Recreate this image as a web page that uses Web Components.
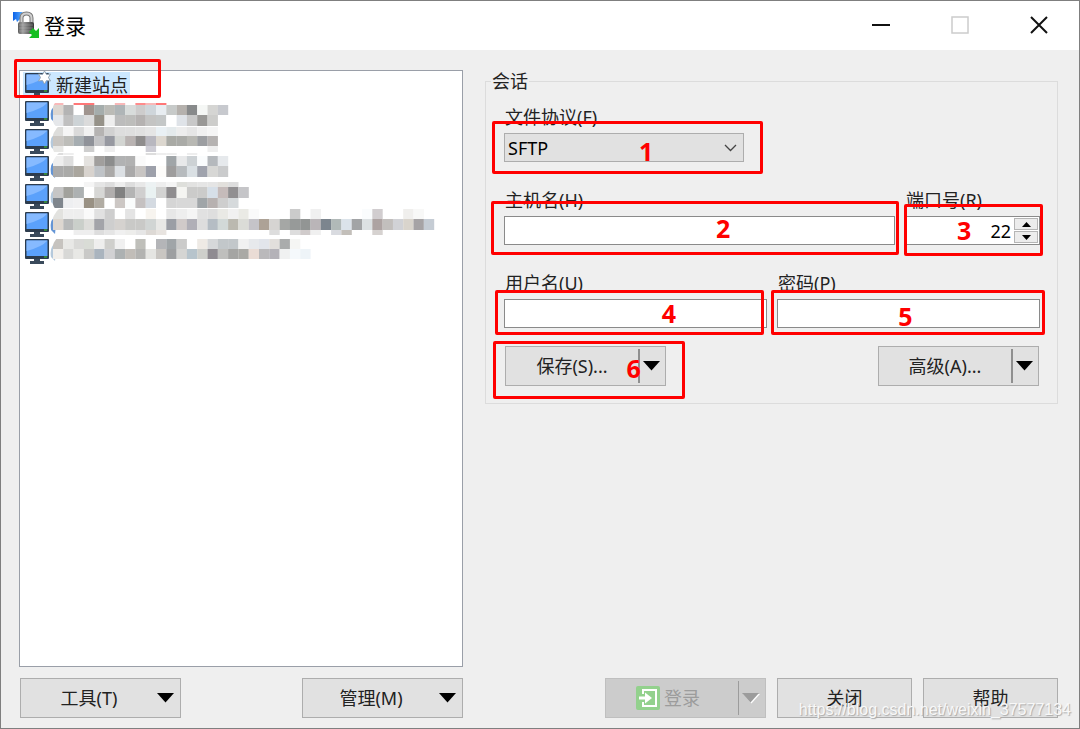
<!DOCTYPE html>
<html lang="zh-CN">
<head>
<meta charset="utf-8">
<meta name="viewport" content="width=device-width, initial-scale=1">
<title>登录</title>
<style>
  body {
    margin: 0;
    font: 18px/24px "Noto Sans", "Noto Sans CJK SC", sans-serif;
    color: #222;
    --face: #e1e1e1;
    --edge: #adadad;
    --mark: #ff0000;
  }
</style>
</head>
<body>
<login-dialog></login-dialog>

<script>
class BaseElement extends HTMLElement {
  constructor() {
    super();
    this.attachShadow({ mode: "open" });
  }
  connectedCallback() {
    const template = document.createElement("template");
    template.innerHTML = `<style>${this.getStyles()}</style>${this.getTemplate()}`;
    this.shadowRoot.replaceChildren(template.content.cloneNode(true));
  }
}

const downArrow = `<svg class="arrow" width="17" height="10" viewBox="0 0 17 10" aria-hidden="true"><path d="M0 0H17L8.5 9.5Z" fill="currentColor"/></svg>`;

// red frame with an optional step number, placed over its parent
customElements.define("step-mark", class extends BaseElement {
  getStyles() {
    return `
      :host {
        position: absolute;
        z-index: 2;
        border: 3px solid var(--mark);
        border-radius: 2px;
        pointer-events: none;
      }
      b {
        position: absolute;
        left: var(--x);
        top: var(--y);
        transform: translate(-50%, -50%);
        font-size: 25px;
        line-height: 28px;
        color: var(--mark);
      }
    `;
  }
  getTemplate() {
    return `<b><slot></slot></b>`;
  }
});

customElements.define("title-bar", class extends BaseElement {
  getStyles() {
    return `
      :host {
        display: flex;
        align-items: center;
        height: 49px;
        padding-left: 12px;
        background: #fff;
      }
      h1 {
        flex: 1;
        margin: 0 0 0 5px;
        font-size: 21px;
        line-height: 28px;
        font-weight: 400;
        color: #000;
      }
      button {
        display: grid;
        place-items: center;
        width: 79px;
        height: 48px;
        padding: 0;
        border: 0;
        background: none;
        color: #111;
      }
      button:last-child { margin-right: 1px; }
      svg { margin-bottom: 1px; }
      button:disabled { color: #ccc; }
    `;
  }
  getTemplate() {
    return `
      <svg width="26" height="28" viewBox="0 0 26 28" aria-hidden="true">
        <defs>
          <linearGradient id="body" x1="0" x2="1">
            <stop offset="0" stop-color="#5c5c5c"/><stop offset=".3" stop-color="#a0a0a0"/><stop offset="1" stop-color="#383838"/>
          </linearGradient>
          <linearGradient id="blue" x1="0" x2="1">
            <stop offset="0" stop-color="#0b62e8"/><stop offset="1" stop-color="#5fb0ff"/>
          </linearGradient>
        </defs>
        <path d="M0 1H10L7 4L9 6L4 11L3 8L0 10Z" fill="url(#blue)"/>
        <path d="M8.500 14V7Q8.500 2.500 13.500 2.500T18.500 7V14" fill="none" stroke="#777" stroke-width="4"/>
        <path d="M8.500 14V7Q8.500 2.500 13.500 2.500T18.500 7V14" fill="none" stroke="#d0d0d0" stroke-width="2"/>
        <rect x="5" y="11" width="16" height="12" rx="2" fill="url(#body)"/>
        <path d="M6 14H20M6 17H20M6 20H20" stroke="#ccc" stroke-width="1" opacity=".3"/>
        <path d="M26 17V27H16L19 24L16 21L20 17L23 20Z" fill="#16bf22"/>
      </svg>
      <h1><slot></slot></h1>
      <button type="button" aria-label="最小化"><svg width="18" height="18"><path d="M0 9H18" stroke="currentColor" stroke-width="2"/></svg></button>
      <button type="button" aria-label="最大化" disabled><svg width="18" height="18"><rect x="1" y="1" width="16" height="16" fill="none" stroke="currentColor" stroke-width="1.500"/></svg></button>
      <button type="button" aria-label="关闭窗口"><svg width="18" height="18"><path d="M1 1L17 17M17 1L1 17" stroke="currentColor" stroke-width="2"/></svg></button>
    `;
  }
});

// blurred site names: [top, height, first column, colours]; "-" leaves a cell empty
const names = {
  1: [
    [4, 2, 0, "f9b8b8 - ff7777 ff7777 - - f9b8b8 - ff8b8b f9b8b8 ff7777"],
    [6, 10, 0, "dcd6d0 b4b4b4 fff a0958f a5adac bbbbb6 afb5b7 d8dcdb cdcccc cfd6db e8edf1 c7cac9 b5b1ad 888a8b f5f7f5 d5d5d3 c7c9ce"],
    [16, 11, 0, "e5e7ea c0c0c0 cdd3d6 dbdbdb 969289 eeeeee bcbcbc bdbdbb b5b2b1 c4c4c3 c4c7c7 fff dfe3e8 c8c8c8 999896 cdcdcb"],
  ],
  2: [
    [0, 9, 0, "dddddb f5f5f5 dadada f1f1f1 b5b3b2 d1d1d1 dddddd dedede e0e0e0 e5e5e5 e9f0f4 e4eaec ededed e6e6e6 f0f0f0 f5f5f5"],
    [9, 10, 0, "c9c6c2 bdbdb9 a6adb1 8f9299 c3c3c5 9799a1 d3d5d2 b9b3b2 8f8d8d b8b7bf dcd7cf a9aaa5 aaaba7 b8b8b3 9c9ea1 b5b2b1"],
    [19, 6, 0, "e7e7e5 - - cecece - eeeeee - - - cecdd5 - - - - - eeeeee"],
  ],
  3: [
    [-1, 2, 0, "dddddd eeeeee - - - - - - - dddddd eeeeee eeeeee - eeeeee"],
    [2, 10, 0, "eeeeee dedede fff e4e2df a19f9d 8c8d8d b1b2b3 b1b1b1 fafafa fff fff a0a5a8 e8e9ea cdd2d5 fafcfd b5b9bd e6e9ec"],
    [12, 11, 0, "aaa aaaaa8 aaa69e d8d3ce bfc3c7 aaa9a8 dce0e4 aaa9a9 c8c5c3 9da0aa fdfcfa 9e9d9d b7bbbe dae0e4 a0a3ad d7d7d5 cacbcc"],
  ],
  4: [
    [0, 5, 3, "f5f5f5 e5e5e5 dddddd eeeeee dddddd e8e8e8 edf2f3 eeeeee f5f5f5 dedfdb e2e2e1 e5e5e5 e5e5e5 e2e0dc dddddd"],
    [5, 11, 0, "c6c6c6 a2a29d adb1b2 fff d7d7d5 b1aead 818181 b4b4b4 d0cfcf eaf2f2 d3d3d2 8f8d8f f5f5f2 cbcbca cbcbca d6dfe8 c5bbba 918f91 c5c5c8"],
    [16, 10, 0, "7f868d eeeff1 f1f1f2 999184 b1aca3 fff ccc7c4 fafcfc c5c1c1 d4dae1 fff d5d5d5 d8d8d8 d8d8d8 a0a5a8 b7b1b0 cecece d6dadc"],
  ],
  5: [
    [-1, 10, 0, "e2e2df eeeeee eeeeee fafafa e1e1e1 cecece fff e4e4e4 fff f7f4ef fff e7e7e7 eeeeee f5f5f5 e1e1e1 dedede e9e9e5 f1f1f1 eaeae5 fafafa - - - cbcbcb - f0f0f0 - - - - fafcfd d1cdcf - - f0efed f8f8f7"],
    [9, 11, 0, "ddd7d0 b8baba cacfca ddddda a3a4a9 cecece d5d2cf c9c9c7 c9c9c7 d1d5d4 e8e8e6 9b9ea5 d0cac9 b0afb7 dddddd b5bdc4 d2d9d8 bbb9b0 dbdcd7 c5c4c9 ada296 d6d4d2 a5a7a5 979a99 929594 bab5b8 7c858e b1b9b8 dbe3ea a2a4a6 dce1e3 ada3a2 c2bfbd d1d2d6 d9d4cc a6a3a5 c5ccd4"],
    [20, 5, 2, "eeeeee eeeeee dddddd e5e5e5 f0f0f0 ededeb e6e6e6 ddd9d5 e8e4e0 - - - - - - - - - - dddddd - dddddd d0cbcb f0f0f0 - d9dbe0 c3bfba - - d6d2d0"],
  ],
  6: [
    [2, 10, 0, "c6c3bf e8e8e6 dadad8 d9dcd6 eeeeed cfcfcc f0f0f0 fff bfbfba fff b4b5b8 a0a5a8 cbcbca fff eeeae5 d6d8da c2c7ca c2c7ca f1f1f1 e7e9ec e2e5eb e2dfdc aaacac f5f6f4"],
    [12, 10, 0, "f2efeb d8d8d6 e8e8e5 c9c9c7 aab4be d1d1d3 adb1b2 c1bdb8 b3b3b1 e5e5e2 c9c6c2 9d9fa1 d5d5d3 b7c4cc cecfcb 8f8b91 bfbfbd a5a5a3 aaa9a5 eadcd5 bab9bb b4b2b8 f0f1f1 f5f9fc eef4f8"],
  ],
};

customElements.define("site-item", class extends BaseElement {
  getStyles() {
    return `
      :host { display: flex; height: 28px; }
      .item {
        position: relative;
        display: flex;
        align-items: center;
        gap: 7px;
        padding: 0 2px 0 2px;
      }
      .item svg { flex: none; overflow: visible; }
      :host([selected]) .item { background: linear-gradient(#cce8ff, #cce8ff) 0 1px / 100% 25px no-repeat; }
      .names { margin-left: -6px; }
    `;
  }
  getTemplate() {
    const selected = this.hasAttribute("selected");
    return `
      <div class="item">
        <svg width="24" height="25" viewBox="0 0 24 25" aria-hidden="true">
          <rect width="24" height="20" rx="1" fill="#2d3c4d"/>
          <rect x="1.500" y="1.500" width="21" height="15.500" fill="#5ba1fb"/>
          <path d="M1.500 1.500H22.500Q17 8 1.500 12Z" fill="#86baff"/>
          <path d="M9 20H15V22H19V25H5V22H9Z" fill="#3a4a5b"/>
          <path d="M19 18H22" stroke="#43d12e" stroke-width="1"/>
          ${selected ? `<path d="M19.500 -2L21.500 1.500L25.500 1L23.500 4.500L25.500 8L21.500 7.500L19.500 11L17.500 7.500L13.500 8L15.500 4.500L13.500 1L17.500 1.500Z" fill="#fff" stroke="#93a5b5" stroke-width="1"/>` : ""}
        </svg>
        ${selected ? `<slot></slot>` : this.getNames()}
      </div>
      <slot name="mark"></slot>
    `;
  }
  getNames() {
    const step = 10.3;
    const key = this.getAttribute("name-key");
    const cells = names[key].flatMap(([top, height, first, colours]) =>
      colours.split(" ").map((colour, i) => colour === "-" ? "" :
        `<rect x="${(first + i) * step}" y="${top}" width="${step + 0.1}" height="${height}" fill="#${colour}"/>`));
    return `
      <svg class="names" width="400" height="28" aria-hidden="true">
        <path d="M7 5Q-1 9 1 20L5 24Z" fill="${key % 2 ? "#6495d5" : "#b5c9dc"}"/>
        <clipPath id="soft"><path d="M10 -2H400V30H10Q2 27 2 16Q2 4 10 -2Z"/></clipPath>
        <g clip-path="url(#soft)"><g transform="translate(3)">${cells.join("")}</g></g>
      </svg>
    `;
  }
});

customElements.define("site-list", class extends BaseElement {
  getStyles() {
    return `
      :host {
        display: block;
        flex: 1;
        box-sizing: border-box;
        padding-left: 3px;
        border: 1px solid #9a9fa8;
        background: #fff;
      }
      ::slotted(:nth-child(3n)) { margin-bottom: -1px; }
    `;
  }
  getTemplate() {
    return `<slot></slot>`;
  }
});

// plain push button; "menu" adds a drop arrow, "split" gives the arrow its own button
customElements.define("push-button", class extends BaseElement {
  getStyles() {
    return `
      :host {
        display: flex;
        position: relative;
        box-sizing: border-box;
        width: 135px;
        height: 40px;
        border: 1px solid var(--edge);
        background: var(--face);
      }
      :host([menu]), :host([split]) { width: 161px; }
      :host([disabled]) { border-color: #bfbfbf; background: #ccc; }
      button {
        display: flex;
        align-items: center;
        justify-content: center;
        padding: 0;
        border: 0;
        background: none;
        font: inherit;
        color: inherit;
      }
      .main { flex: 1; }
      .text { display: flex; align-items: center; gap: 4px; }
      .arrow { color: #000; }
      :host([menu]) .text { flex: 1; justify-content: center; }
      :host([menu]) .arrow { margin-right: 6px; }
      .drop { width: 27px; justify-content: flex-start; }
      .drop::before {
        content: "";
        width: 2px;
        height: 34px;
        margin-right: 3px;
        background: #8f8f8f;
      }
      button:disabled, button:disabled .arrow { color: #9c9c9c; }
      button:disabled .arrow { filter: drop-shadow(1px 1px #fff); }
      .main:disabled { padding-right: 8px; }
      .drop:disabled::before { width: 1px; background: #9c9c9c; }
    `;
  }
  getTemplate() {
    const off = this.hasAttribute("disabled") ? "disabled" : "";
    return `
      <button class="main" type="button" ${off}>
        <span class="text"><slot name="icon"></slot><slot></slot></span>
        ${this.hasAttribute("menu") ? downArrow : ""}
      </button>
      ${this.hasAttribute("split") ? `<button class="drop" type="button" aria-label="更多" ${off}>${downArrow}</button>` : ""}
      <slot name="mark"></slot>
    `;
  }
});

customElements.define("form-field", class extends BaseElement {
  getStyles() {
    return `
      :host { display: block; min-width: 0; }
      label { display: block; height: 27px; margin: 0 0 3px 1px; line-height: 28px; }
      .box { position: relative; display: flex; height: 29px; }
      input, select {
        flex: 1;
        min-width: 0;
        box-sizing: border-box;
        margin: 0;
        padding: 0 4px;
        border: 1px solid #8a8a8a;
        border-radius: 0;
        background: #fff;
        font: inherit;
        color: #000;
        appearance: none;
        outline: 0;
      }
      select { padding: 0 3px; border-color: var(--edge); background: var(--face); }
      .chevron { position: absolute; right: 7px; top: 11px; pointer-events: none; }
      input[type=number] { padding-right: 28px; text-align: right; appearance: textfield; }
      input::-webkit-inner-spin-button { appearance: none; margin: 0; }
      .spin { position: absolute; right: 2px; top: 2px; display: grid; gap: 1px; }
      .spin button {
        display: grid;
        place-items: center;
        width: 24px;
        height: 12px;
        padding: 0;
        border: 1px solid #b5b5b5;
        background: #ececec;
      }
    `;
  }
  getTemplate() {
    return `
      <label for="control">${this.getAttribute("label")}</label>
      <div class="box">${this.getControl()}<slot></slot></div>
    `;
  }
  getControl() {
    const type = this.getAttribute("type");
    const value = this.getAttribute("value") || "";
    if (type === "select") {
      return `
        <select id="control"><option>${value}</option></select>
        <svg class="chevron" width="13" height="8" aria-hidden="true"><path d="M1 1L6.500 6.500L12 1" fill="none" stroke="#444" stroke-width="1.300"/></svg>
      `;
    }
    if (type === "number") {
      return `
        <input id="control" type="number" value="${value}">
        <div class="spin">
          <button type="button" aria-label="增加"><svg width="9" height="5"><path d="M0 5H9L4.500 0Z"/></svg></button>
          <button type="button" aria-label="减少"><svg width="9" height="5"><path d="M0 0H9L4.500 5Z"/></svg></button>
        </div>
      `;
    }
    return `<input id="control" type="${type || "text"}">`;
  }
});

customElements.define("session-group", class extends BaseElement {
  getStyles() {
    return `
      :host { display: block; }
      fieldset {
        min-width: 0;
        margin: 0;
        padding: 11px 17px 17px 18px;
        border: 1px solid #dcdcdc;
      }
      legend { margin-left: -13px; padding: 0 1px; line-height: 22px; }
      .row { display: grid; gap: 10px; margin-bottom: 24px; }
      .protocol { grid-template-columns: 240px; }
      .host { grid-template-columns: 391fr 135fr; }
      .user { grid-template-columns: 1fr 1fr; margin-bottom: 18px; }
      .actions { display: flex; justify-content: space-between; padding: 0 1px; }
    `;
  }
  getTemplate() {
    return `
      <fieldset>
        <legend>会话</legend>
        <div class="row protocol">
          <form-field label="文件协议(F)" type="select" value="SFTP">
            <step-mark style="inset: -12px -19px -12px -12px; --x: 57%; --y: 57%">1</step-mark>
          </form-field>
        </div>
        <div class="row host">
          <form-field label="主机名(H)">
            <step-mark style="inset: -15px -4px -10px -13px; --x: 57%; --y: 50%">2</step-mark>
          </form-field>
          <form-field label="端口号(R)" type="number" value="22">
            <step-mark style="inset: -12px -3px -11px -1px; --x: 43%; --y: 51%">3</step-mark>
          </form-field>
        </div>
        <div class="row user">
          <form-field label="用户名(U)">
            <step-mark style="inset: -9px 3px -7px -9px; --x: 65%; --y: 50%">4</step-mark>
          </form-field>
          <form-field label="密码(P)" type="password">
            <step-mark style="inset: -9px -5px -7px -6px; --x: 49%; --y: 60%">5</step-mark>
          </form-field>
        </div>
        <div class="actions">
          <push-button split>保存(S)...
            <step-mark slot="mark" style="inset: -6px -20px -14px -13px; --x: 74%; --y: 47%">6</step-mark>
          </push-button>
          <push-button split>高级(A)...</push-button>
        </div>
      </fieldset>
    `;
  }
});

customElements.define("login-dialog", class extends BaseElement {
  getStyles() {
    return `
      :host {
        position: relative;
        display: flex;
        flex-direction: column;
        box-sizing: border-box;
        min-height: 100vh;
        border: 1px solid #7f7f7f;
        background: #efefef;
      }
      main {
        flex: 1;
        display: grid;
        grid-template-columns: 444fr 573fr;
        gap: 22px;
        padding: 20px 21px 10px 18px;
      }
      section { display: flex; flex-direction: column; justify-content: space-between; min-width: 0; }
      site-item:first-child { position: relative; }
      .bar { display: flex; justify-content: space-between; margin-top: 11px; }
      .start { padding-left: 1px; }
      .end { justify-content: flex-end; gap: 11px; }
      .watermark {
        position: absolute;
        right: 8px;
        bottom: 8px;
        font: 16px/20px "Liberation Sans", sans-serif;
        color: #f8f8f8;
        text-shadow: 1px 1px 1px #aaa;
        pointer-events: none;
      }
    `;
  }
  getTemplate() {
    return `
      <title-bar>登录</title-bar>
      <main>
        <section>
          <site-list role="listbox" aria-label="站点">
            <site-item role="option" selected aria-selected="true">新建站点
              <step-mark slot="mark" style="inset: -12px auto 1px -9px; width: 141px"></step-mark>
            </site-item>
            ${Object.keys(names).map((key) => `<site-item role="option" name-key="${key}"></site-item>`).join("")}
          </site-list>
          <div class="bar start">
            <push-button menu>工具(T)</push-button>
            <push-button menu>管理(M)</push-button>
          </div>
        </section>
        <section>
          <session-group></session-group>
          <div class="bar end">
            <push-button split disabled>
              <svg slot="icon" width="24" height="24" viewBox="0 0 24 24" aria-hidden="true">
                <rect width="24" height="24" rx="2" fill="#93d18d"/>
                <path d="M7 8V4H20V20H7V16" fill="none" stroke="#fff" stroke-width="2"/>
                <path d="M3 10.500H9V6.500L16 12L9 17.500V13.500H3Z" fill="#fff"/>
              </svg>登录</push-button>
            <push-button>关闭</push-button>
            <push-button>帮助</push-button>
          </div>
        </section>
      </main>
      <div class="watermark">https://blog.csdn.net/weixin_37577134</div>
    `;
  }
});
</script>
</body>
</html>
